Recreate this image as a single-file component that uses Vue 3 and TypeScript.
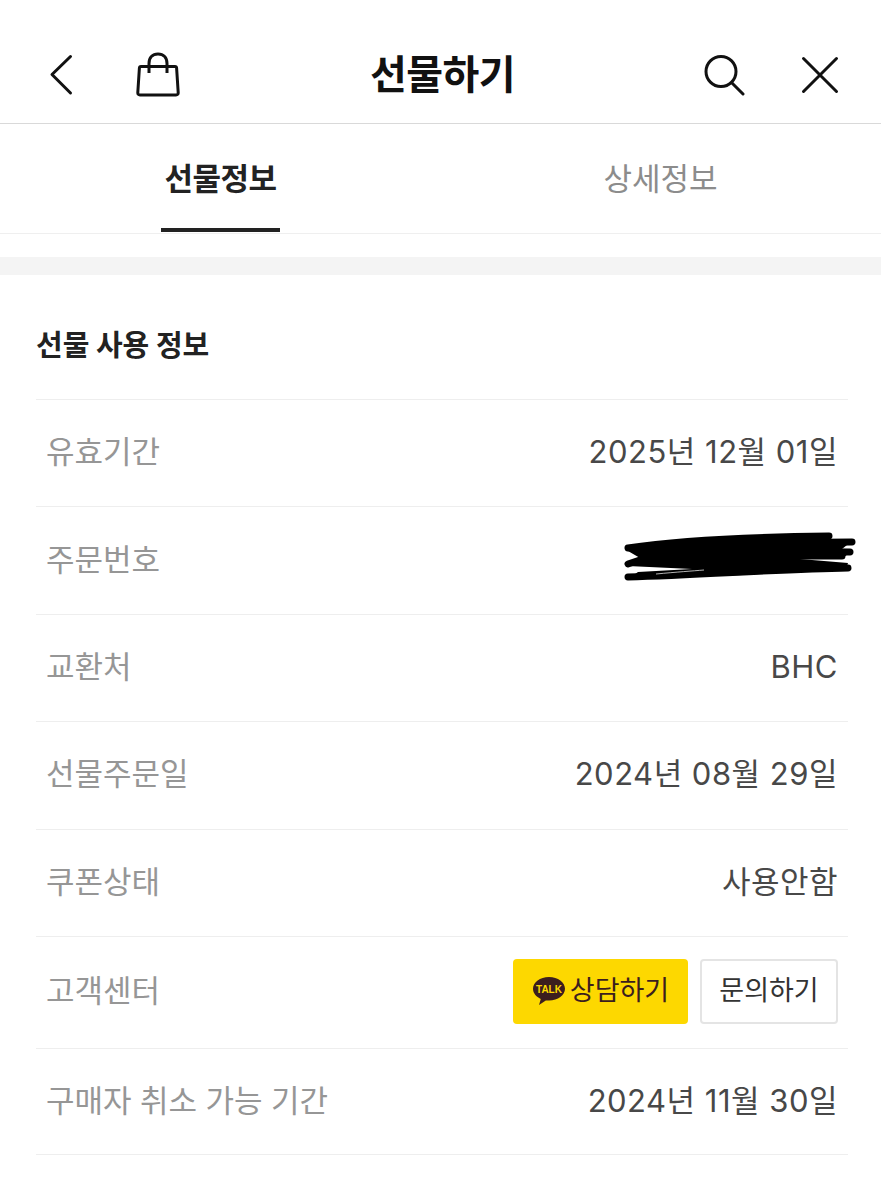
<script setup lang="ts">
interface InfoRow {
  label: string;
  value?: string;
  kind?: "scribble" | "support";
}

const rows: InfoRow[] = [
  { label: "유효기간", value: "2025년 12월 01일" },
  { label: "주문번호", kind: "scribble" },
  { label: "교환처", value: "BHC" },
  { label: "선물주문일", value: "2024년 08월 29일" },
  { label: "쿠폰상태", value: "사용안함" },
  { label: "고객센터", kind: "support" },
  { label: "구매자 취소 가능 기간", value: "2024년 11월 30일" },
];
</script>

<template>
  <div class="page">
    <header class="topbar">
      <div class="topbar-left">
        <svg class="icon-back" width="26" height="42" viewBox="0 0 26 42" fill="none">
          <path d="M22.5 2.5 L4 20.5 L22.5 39" stroke="#111" stroke-width="3" stroke-linecap="round" stroke-linejoin="round" />
        </svg>
        <svg class="icon-bag" width="48" height="46" viewBox="0 0 48 46" fill="none">
          <path d="M7 14.5 H41 Q42.5 14.5 42.6 16 L44.2 40.5 Q44.3 43 42 43 H6 Q3.7 43 3.8 40.5 L5.4 16 Q5.5 14.5 7 14.5 Z" stroke="#111" stroke-width="3" stroke-linejoin="round" />
          <path d="M15 21 V11.5 C15 5.5 18.5 2 24 2 C29.5 2 33 5.5 33 11.5 V21" stroke="#111" stroke-width="3" />
        </svg>
      </div>
      <h1 class="title">선물하기</h1>
      <div class="topbar-right">
        <svg class="icon-search" width="42" height="42" viewBox="0 0 42 42" fill="none">
          <circle cx="18" cy="17.5" r="15" stroke="#111" stroke-width="3" />
          <path d="M29 29 L40 40" stroke="#111" stroke-width="3" stroke-linecap="round" />
        </svg>
        <svg class="icon-close" width="38" height="38" viewBox="0 0 38 38" fill="none">
          <path d="M2.5 2.5 L35.5 35.5 M35.5 2.5 L2.5 35.5" stroke="#111" stroke-width="3" stroke-linecap="round" />
        </svg>
      </div>
    </header>

    <nav class="tabs">
      <div class="tab active"><span class="tab-text">선물정보</span></div>
      <div class="tab"><span class="tab-text">상세정보</span></div>
    </nav>

    <div class="band"></div>

    <section class="info">
      <h2 class="info-title">선물 사용 정보</h2>
      <div v-for="row in rows" :key="row.label" class="row" :class="{ tall: row.kind === 'support' }">
        <span class="label">{{ row.label }}</span>
        <span v-if="row.value" class="value">{{ row.value }}</span>
        <svg v-else-if="row.kind === 'scribble'" class="scribble" width="234" height="52" viewBox="0 0 234 52">
          <path d="M14 14 L205 4 L209 9 L230 10 L220 18 L229 21 L222 26 L178 28 L226 32 L224 38 L120 44 L6 48 L16 41 L70 38 L6 35 L10 29 L18 27 L6 20 Z" fill="#000" />
          <g fill="none" stroke="#000" stroke-linecap="round" stroke-width="7">
            <path d="M6 17 C60 9 130 6 207 5" />
            <path d="M120 12 L230 11" />
            <path d="M100 20 L228 21" />
            <path d="M6 33 L30 25 L220 25" />
            <path d="M6 46 C80 44 160 38 226 37" />
          </g>
          <path d="M34 43 C55 41 70 40 82 39" stroke="#fff" stroke-width="1" fill="none" opacity="0.7" />
        </svg>
        <div v-else class="support">
          <button class="btn talk">
            <svg class="talk-icon" width="34" height="30" viewBox="0 0 34 30">
              <path d="M17 1 C8 1 1 6.3 1 12.8 C1 17.2 4.2 20.9 8.8 22.9 L7 29 L13.8 24.4 C14.8 24.5 15.9 24.6 17 24.6 C26 24.6 33 19.3 33 12.8 C33 6.3 26 1 17 1 Z" fill="#3c1e1e" />
              <text x="17" y="16.5" class="talk-text" text-anchor="middle">TALK</text>
            </svg>
            상담하기
          </button>
          <button class="btn ask">문의하기</button>
        </div>
      </div>
    </section>
  </div>
</template>

<style>
html,
body {
  background: #fff;
}
</style>

<style scoped>
.page {
  width: 881px;
  height: 1200px;
  overflow: hidden;
  background: #fff;
  font-family: "Noto Sans CJK KR", "Noto Sans", sans-serif;
}
.topbar {
  height: 124px;
  box-sizing: border-box;
  border-bottom: 1px solid #d9d9d9;
  display: flex;
  align-items: center;
  justify-content: space-between;
  padding: 26px 42px 0 48px;
}
.topbar-left,
.topbar-right {
  display: flex;
  align-items: center;
}
.topbar-left {
  gap: 60px;
}
.topbar-right {
  gap: 56px;
}
.title {
  margin: 0 0 6px;
  font-size: 40px;
  line-height: 50px;
  font-weight: 700;
  color: #111;
  letter-spacing: -0.5px;
}
.tabs {
  height: 110px;
  box-sizing: border-box;
  border-bottom: 1px solid #efefef;
  display: flex;
}
.tab {
  width: 440px;
  box-sizing: border-box;
  display: flex;
  justify-content: center;
}
.tab:last-child {
  width: 441px;
}
.tab-text {
  font-size: 31px;
  line-height: 106px;
  color: #8c8c8c;
}
.tab.active {
  justify-content: flex-start;
  padding-left: 161px;
}
.tab.active .tab-text {
  width: 119px;
  height: 104px;
  text-align: center;
  font-weight: 700;
  color: #222;
  border-bottom: 4px solid #222;
  white-space: nowrap;
  letter-spacing: -0.5px;
}
.band {
  height: 18px;
  margin-top: 23px;
  background: #f4f4f4;
}
.info {
  padding: 0 33px 0 36px;
}
.info-title {
  margin: 0;
  height: 124px;
  box-sizing: border-box;
  padding-top: 46px;
  font-size: 29px;
  line-height: 44px;
  font-weight: 700;
  color: #222;
}
.row {
  height: 107.4px;
  box-sizing: border-box;
  border-top: 1px solid #eeeeee;
  display: flex;
  align-items: center;
  justify-content: space-between;
  padding: 0 10px;
}
.row.tall {
  height: 112px;
}
.row:last-child {
  border-bottom: 1px solid #eeeeee;
}
.label {
  font-size: 31px;
  line-height: 44px;
  padding-bottom: 6px;
  color: #969696;
  word-spacing: 1.5px;
}
.value {
  font-family: "Inter", "Noto Sans CJK KR", sans-serif;
  font-size: 31px;
  line-height: 44px;
  padding-bottom: 2px;
  color: #484848;
  letter-spacing: 0.5px;
}
.scribble {
  margin-right: -18px;
  margin-bottom: 7px;
}
.support {
  display: flex;
  gap: 12px;
  margin-bottom: 2px;
}
.btn {
  height: 65px;
  box-sizing: border-box;
  border-radius: 4px;
  font-family: inherit;
  font-size: 27px;
  padding: 0 0 6px;
  display: flex;
  align-items: center;
  justify-content: center;
}
.talk {
  width: 175px;
  gap: 4px;
  background: #fdd800;
  border: 0;
  color: #3c1e1e;
}
.talk-icon {
  margin-top: 6px;
}
.talk-text {
  font-family: "Liberation Sans", sans-serif;
  font-size: 10px;
  font-weight: 700;
  fill: #fdd800;
}
.ask {
  width: 138px;
  background: #fff;
  border: 2px solid #e4e4e4;
  color: #333;
}
</style>
